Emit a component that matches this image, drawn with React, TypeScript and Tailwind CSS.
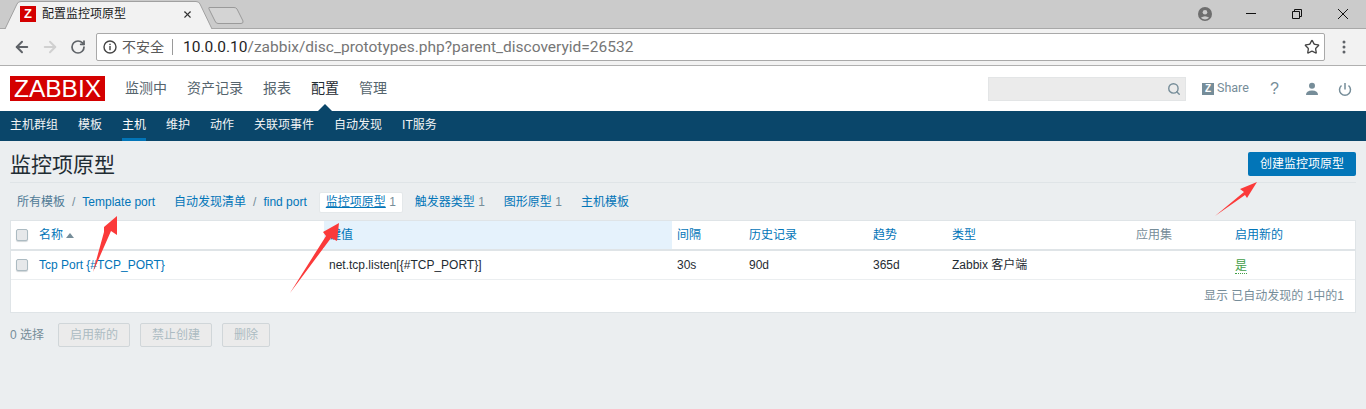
import React from "react";
import { ArrowLeft, ArrowRight, RotateCw, Star, X, Search } from "lucide-react";

const FONT = "font-['Liberation_Sans','Noto_Sans_CJK_SC',sans-serif]";

function Arrow({ className, points, viewBox }: { className: string; points: string; viewBox: string }) {
  return (
    <svg className={`absolute ${className}`} viewBox={viewBox}>
      <polygon points={points} fill="#fb3a3a" />
    </svg>
  );
}

function Checkbox() {
  return <span className="block w-[12px] h-[12px] rounded-[2px] border border-[#acbbc2] bg-[#e6e8ea] shadow-[0_1px_1px_#d0d5d8]" />;
}

function BrowserChrome() {
  return (
    <>
      <div className="relative h-[29px] bg-[#cbcbcb] border-b border-[#a8a8a8] flex items-start">
        <svg className="absolute left-0 top-0 w-[250px] h-[29px]" viewBox="0 0 250 29">
          <path d="M5 29 L17 4 Q18 1.500 21 1.500 L196 1.500 Q199 1.500 200 4 L212 29" fill="#f2f2f2" stroke="#a0a0a0" />
          <path d="M209 7.500 L234 7.500 Q236 7.500 237 9 L243 21 Q243.500 23.500 241 23.500 L218 23.500 Q216 23.500 215 21 L209 9 Q208.500 7.500 209 7.500 Z" fill="#d4d4d4" stroke="#9a9a9a" />
        </svg>
        <div className="relative flex items-center h-[28px] pl-[20px]">
          <span className="w-[16px] h-[16px] bg-[#d40000] text-white text-[13px] leading-[16px] font-bold text-center font-['Liberation_Sans',sans-serif]">Z</span>
          <span className="ml-[6px] w-[141px] text-[12px] text-[#1a1a1a]">配置监控项原型</span>
          <X size={11} strokeWidth={2.4} className="text-[#333] -ml-[1px]" />
        </div>
        <div className="ml-auto relative flex items-center h-[28px]">
          <svg width="14" height="14" viewBox="0 0 14 14" className="mr-[34px]">
            <circle cx="7" cy="7" r="7" fill="#6e6e6e" />
            <circle cx="7" cy="5.300" r="2.300" fill="#cbcbcb" />
            <path d="M2.800 10.800 Q7 7.500 11.200 10.800 Q7 14 2.800 10.800 Z" fill="#cbcbcb" />
          </svg>
          <svg width="10" height="2" viewBox="0 0 10 2" className="mr-[36px]"><rect width="10" height="1" fill="#111" /></svg>
          <svg width="10" height="10" viewBox="0 0 10 10" className="mr-[36px]">
            <path d="M2.500 2.500 V0.500 H9.500 V7.500 H7.500 M0.500 2.500 H7.500 V9.500 H0.500 Z" fill="none" stroke="#111" />
          </svg>
          <svg width="10" height="10" viewBox="0 0 10 10" className="mr-[18px]">
            <path d="M0 0 L10 10 M10 0 L0 10" stroke="#111" fill="none" />
          </svg>
        </div>
      </div>
      <div className="h-[37px] bg-[#f2f2f2] border-b border-[#b0b0b0] flex items-center">
        <ArrowLeft size={18} strokeWidth={2.6} className="ml-[13px] text-[#5f6368]" />
        <ArrowRight size={18} strokeWidth={2.6} className="ml-[10px] text-[#d0d0d0]" />
        <RotateCw size={16} strokeWidth={2.6} className="ml-[11px] text-[#5f6368]" />
        <div className="ml-[10px] w-[1229px] h-[28px] bg-white border border-[#a9a9a9] rounded-[2px] flex items-center">
          <svg width="14" height="14" viewBox="0 0 14 14" className="ml-[6px]">
            <circle cx="7" cy="7" r="6" fill="none" stroke="#444" strokeWidth="1.400" />
            <rect x="6.300" y="6" width="1.400" height="4.200" fill="#444" />
            <rect x="6.300" y="3.700" width="1.400" height="1.400" fill="#444" />
          </svg>
          <span className="ml-[5px] text-[14px] text-[#5a5a5a] leading-none">不安全</span>
          <span className="ml-[8px] w-px h-[16px] bg-[#9a9a9a]" />
          <span className="ml-[10px] mt-[1px] text-[15.500px] leading-none text-[#1f1f1f] font-['Roboto',sans-serif]">
            10.0.0.10<span className="text-[#767676]">/zabbix/disc_prototypes.php?parent_discoveryid=26532</span>
          </span>
          <Star size={16} strokeWidth={2} className="ml-auto mr-[4px] text-[#444]" />
        </div>
        <svg width="4" height="14" viewBox="0 0 4 14" className="ml-[17px]">
          <circle cx="2" cy="2" r="1.500" fill="#5f6368" /><circle cx="2" cy="7" r="1.500" fill="#5f6368" /><circle cx="2" cy="12" r="1.500" fill="#5f6368" />
        </svg>
      </div>
    </>
  );
}

function TopNav() {
  const main = ["监测中", "资产记录", "报表", "配置", "管理"];
  const sub = ["主机群组", "模板", "主机", "维护", "动作", "关联项事件", "自动发现", "IT服务"];
  return (
    <>
      <div className="h-[45px] bg-white flex items-center pl-[10px] pr-[14px]">
        <span className="w-[95px] h-[25px] bg-[#d40000] text-white text-[24.500px] leading-[25px] text-center font-['Liberation_Sans',sans-serif]">ZABBIX</span>
        <nav className="flex ml-[20px] gap-[20px] text-[14px]">
          {main.map((m, i) => (
            <span key={m} className={i === 3 ? "text-[#1f2c33]" : "text-[#55646d]"}>{m}</span>
          ))}
        </nav>
        <div className="ml-auto w-[198px] h-[24px] bg-[#ebebeb] border border-[#e3e5e6] flex items-center justify-end pr-[4px]">
          <Search size={14} strokeWidth={2.4} className="text-[#768d99]" />
        </div>
        <span className="ml-[16px] w-[12px] h-[12px] bg-[#768d99] text-white text-[10px] leading-[12px] font-bold text-center">Z</span>
        <span className="ml-[3px] w-[32px] text-[12.500px] text-[#768d99] font-['Roboto',sans-serif]">Share</span>
        <span className="ml-[21px] w-[9px] text-[16px] leading-none text-center text-[#768d99]">?</span>
        <svg width="14" height="14" viewBox="0 0 14 14" className="ml-[26px]">
          <circle cx="7" cy="3.800" r="3" fill="#768d99" />
          <path d="M1 13 Q1 8.500 7 8.500 Q13 8.500 13 13 Z" fill="#768d99" />
        </svg>
        <svg width="14" height="14" viewBox="0 0 14 14" className="ml-[19px]">
          <path d="M3.500 3.500 A5.500 5.500 0 1 0 10.500 3.500 M7 1 V7.500" fill="none" stroke="#768d99" strokeWidth="1.500" />
        </svg>
      </div>
      <div className="relative h-[30px] bg-[#0a466a] flex pl-[10px] gap-[20px] text-[12px] text-[#f2f4f5]">
        <span className="absolute left-[318px] -top-[7px] w-0 h-0 border-x-[7px] border-x-transparent border-b-[7px] border-b-[#0a466a]" />
        {sub.map((s, i) => (
          <span key={s} className={`h-[30px] leading-[29px] ${i === 2 ? "text-white border-b-[3px] border-[#0275b8]" : ""}`}>{s}</span>
        ))}
      </div>
    </>
  );
}

function Breadcrumb() {
  const a = "text-[#0275b8]";
  return (
    <div className="flex items-center h-[22px] mt-[8px] text-[12px] text-[#768d99]">
      <span className="ml-[17px] text-[#4f7a96]">所有模板</span>
      <span className="mx-[7px]">/</span>
      <span className={a}>Template port</span>
      <span className={`${a} ml-[19px]`}>自动发现清单</span>
      <span className="mx-[7px]">/</span>
      <span className={a}>find port</span>
      <span className="ml-[12px] h-[21px] leading-[19px] bg-white rounded-[2px] border border-[#e4e8ea] px-[6px]">
        <span className={`${a} underline`}>监控项原型</span> 1
      </span>
      <span className="ml-[12px]"><span className={a}>触发器类型</span> 1</span>
      <span className="ml-[19px]"><span className={a}>图形原型</span> 1</span>
      <span className={`${a} ml-[19px]`}>主机模板</span>
    </div>
  );
}

function ItemTable() {
  const cols = "grid-cols-[28px_285px_348px_72px_124px_79px_184px_99px_1fr]";
  const cell = "flex items-center pl-[5px]";
  return (
    <div className="mt-[7px] mx-[10px] bg-white border border-[#dfe4e7] text-[12px]">
      <div className={`grid ${cols} h-[28px] border-b-[2px] border-[#dfe4e7] text-[#0275b8] box-content`}>
        <div className="flex items-center pl-[5px]"><Checkbox /></div>
        <div className="flex items-center">名称<span className="ml-[3px] w-0 h-0 border-x-[4px] border-x-transparent border-b-[5px] border-b-[#768d99]" /></div>
        <div className={`${cell} bg-[#e5f2fc]`}>键值</div>
        <div className={cell}>间隔</div>
        <div className={cell}>历史记录</div>
        <div className={cell}>趋势</div>
        <div className={cell}>类型</div>
        <div className={`${cell} text-[#768d99]`}>应用集</div>
        <div className={cell}>启用新的</div>
      </div>
      <div className={`grid ${cols} h-[28px] box-content border-b border-[#ebeef0] text-[#1f2c33]`}>
        <div className="flex items-center pl-[5px]"><Checkbox /></div>
        <div className="flex items-center text-[#0275b8]">Tcp Port {"{#TCP_PORT}"}</div>
        <div className={cell}>net.tcp.listen[{"{#TCP_PORT}"}]</div>
        <div className={cell}>30s</div>
        <div className={cell}>90d</div>
        <div className={cell}>365d</div>
        <div className={cell}>Zabbix 客户端</div>
        <div className={cell} />
        <div className={cell}><span className="text-[#429e47] border-b border-dotted border-[#429e47] leading-[14px] mt-[2px]">是</span></div>
      </div>
      <div className="h-[32px] flex items-center justify-end pr-[11px] text-[#768d99]">显示 已自动发现的 1中的1</div>
    </div>
  );
}

function ActionBar() {
  const btn = "h-[24px] px-[11px] rounded-[2px] border border-[#d0d6d9] bg-[#ebebeb] text-[#acbbc2] text-[12px] flex items-center";
  return (
    <div className="flex items-center mx-[10px] mt-[10px] text-[12px] text-[#768d99]">
      <span>0 选择</span>
      <span className={`${btn} ml-[14px]`}>启用新的</span>
      <span className={`${btn} ml-[10px]`}>禁止创建</span>
      <span className={`${btn} ml-[10px]`}>删除</span>
    </div>
  );
}

export default function App() {
  return (
    <div className={`relative w-[1366px] h-[409px] overflow-hidden bg-[#ebeef0] ${FONT}`}>
      <BrowserChrome />
      <TopNav />
      <main>
        <div className="mx-[10px] h-[42px] border-b border-[#dfe4e7] flex items-start justify-between">
          <h1 className="text-[21px] leading-[25px] mt-[11px] text-[#1f2c33]">监控项原型</h1>
          <span className="mt-[11px] h-[24px] w-[108px] bg-[#0275b8] rounded-[2px] text-white text-[12px] flex items-center justify-center">创建监控项原型</span>
        </div>
        <Breadcrumb />
        <ItemTable />
        <ActionBar />
      </main>
      <Arrow className="left-[90px] top-[214px] w-[30px] h-[60px]" viewBox="90 214 30 60"
        points="93,272 104,232 104,227 117,216 117,235 111,231" />
      <Arrow className="left-[286px] top-[220px] w-[56px] h-[76px]" viewBox="286 220 56 76"
        points="290,293 326,236 323,232 339,223 337,241 331,238" />
      <Arrow className="left-[1210px] top-[178px] w-[50px] h-[40px]" viewBox="1210 178 50 40"
        points="1215,216 1244,192 1240,189 1257,182 1247,198 1245,195" />
    </div>
  );
}
